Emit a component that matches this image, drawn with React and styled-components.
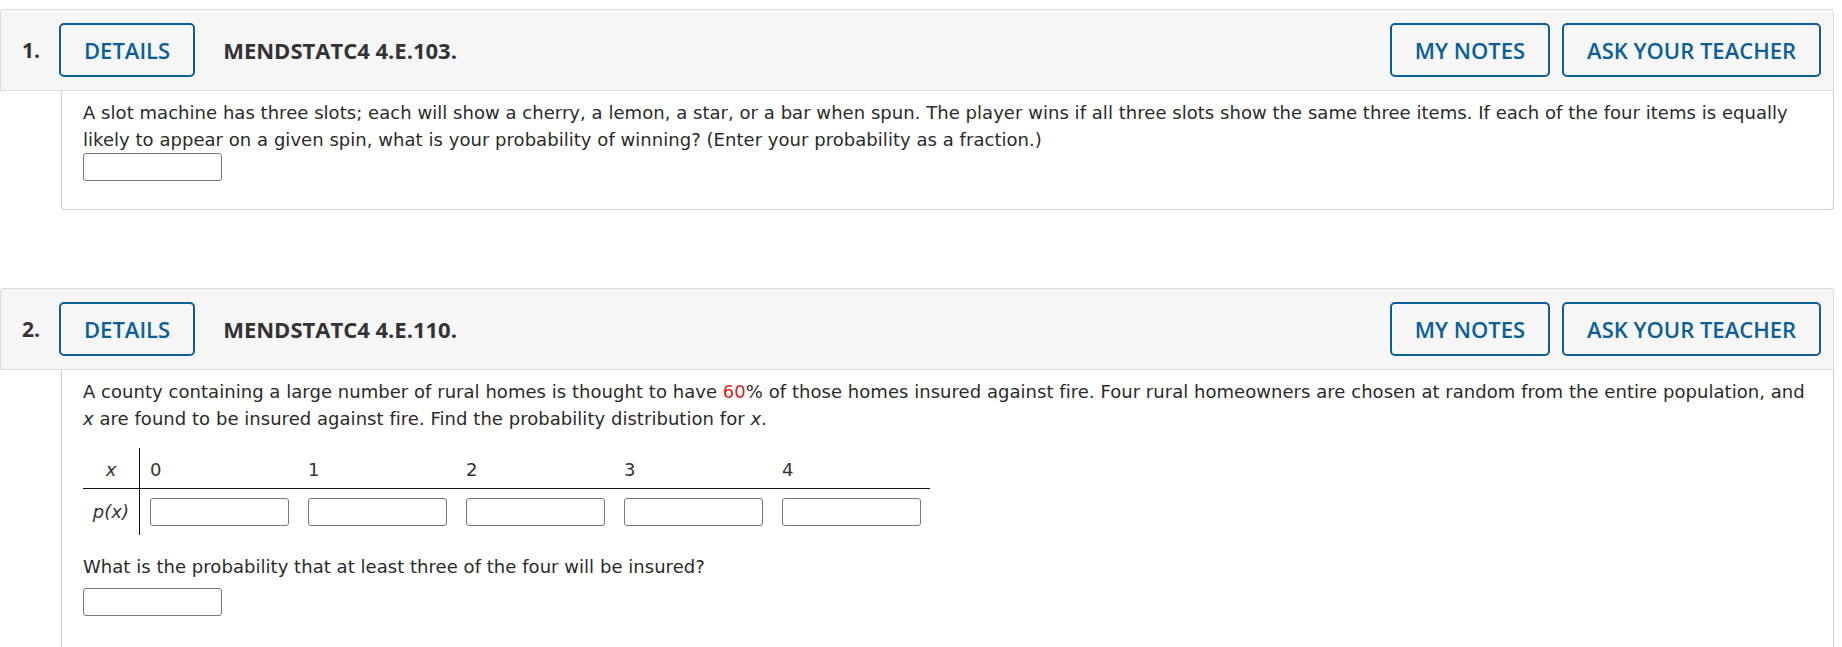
import React from 'react';
import styled, { createGlobalStyle } from 'styled-components';

const GlobalStyle = createGlobalStyle`
  body {
    margin: 0;
    background: #fff;
  }
`;

const Page = styled.div`
  display: flex;
  flex-direction: column;
  gap: 78px;
  padding: 9px 8px 0 0;
`;

const Question = styled.section`
  display: flex;
  flex-direction: column;
`;

const Header = styled.div`
  display: flex;
  align-items: center;
  height: 82px;
  box-sizing: border-box;
  padding-right: 12px;
  background: #f6f6f6;
  border: 1px solid #dcdcdc;
  border-radius: 3px 3px 0 0;
  font-family: "Open Sans", "Liberation Sans", sans-serif;
`;

const Num = styled.span`
  width: 58px;
  box-sizing: border-box;
  padding-left: 21px;
  font-size: 21px;
  font-weight: 700;
  color: #333;
`;

const Title = styled.span`
  flex: 1;
  margin-left: 28px;
  font-size: 22px;
  font-weight: 700;
  color: #333;
`;

const Actions = styled.div`
  display: flex;
  gap: 12px;
`;

const HeadButton = styled.button`
  height: 54px;
  box-sizing: border-box;
  padding: 0 23px;
  background: transparent;
  border: 2px solid #0b5f99;
  border-radius: 5px;
  font-family: inherit;
  font-size: 22px;
  font-weight: 600;
  color: #0b5f99;
  cursor: pointer;
`;

const Body = styled.div`
  margin-left: 61px;
  padding: 8px 23px ${(p) => (p.$open ? '40px' : '28px')} 21px;
  border: 1px solid #cfcfcf;
  border-top: none;
  border-bottom: ${(p) => (p.$open ? 'none' : '1px solid #cfcfcf')};
  border-radius: 0 0 4px 4px;
  font-family: "DejaVu Sans", Verdana, sans-serif;
  font-size: 18px;
  letter-spacing: 0.04px;
  line-height: 27px;
  color: #2a2a2a;
`;

const Text = styled.p`
  margin: 0;
  margin-top: ${(p) => p.$top || 0}px;
`;

const Var = styled.i`
  font-style: italic;
`;

const Red = styled.span`
  color: #e0201b;
`;

const AnswerBox = styled.input`
  display: block;
  width: 139px;
  height: 28px;
  box-sizing: border-box;
  margin: ${(p) => p.$top || 0}px 0 0;
  padding: 0 4px;
  border: 1px solid #777;
  border-radius: 3px;
  background: #fff;
  font-family: inherit;
  font-size: 15px;
`;

const Dist = styled.table`
  margin-top: 16px;
  border-collapse: collapse;
  font-size: 18px;
  color: #333;
`;

const LabelCell = styled.th`
  width: 56px;
  padding: ${(p) => (p.$head ? '4px 0 0' : '0')};
  border-right: 1px solid #111;
  font-weight: 400;
  font-style: italic;
  text-align: center;
`;

const HeadRow = styled.tr`
  height: 40px;
  border-bottom: 1px solid #111;
`;

const ValueRow = styled.tr`
  height: 47px;
`;

const HeadCell = styled.th`
  padding: 4px 9px 0 10px;
  font-weight: 400;
  text-align: left;
`;

const InputCell = styled.td`
  padding: 9px 9px 9px 10px;
`;

const values = [0, 1, 2, 3, 4];

export default function App() {
  return (
    <>
      <GlobalStyle />
      <Page>
        <Question>
          <Header>
            <Num>1.</Num>
            <HeadButton>DETAILS</HeadButton>
            <Title>MENDSTATC4 4.E.103.</Title>
            <Actions>
              <HeadButton>MY NOTES</HeadButton>
              <HeadButton>ASK YOUR TEACHER</HeadButton>
            </Actions>
          </Header>
          <Body>
            <Text>
              A slot machine has three slots; each will show a cherry, a lemon, a star, or a bar when spun. The player wins if all three slots show the same three items. If each of the four items is equally likely to appear on a given spin, what is your probability of winning? (Enter your probability as a fraction.)
            </Text>
            <AnswerBox type="text" />
          </Body>
        </Question>

        <Question>
          <Header>
            <Num>2.</Num>
            <HeadButton>DETAILS</HeadButton>
            <Title>MENDSTATC4 4.E.110.</Title>
            <Actions>
              <HeadButton>MY NOTES</HeadButton>
              <HeadButton>ASK YOUR TEACHER</HeadButton>
            </Actions>
          </Header>
          <Body $open>
            <Text>
              A county containing a large number of rural homes is thought to have <Red>60</Red>% of those homes insured against fire. Four rural homeowners are chosen at random from the entire population, and <Var>x</Var> are found to be insured against fire. Find the probability distribution for <Var>x</Var>.
            </Text>
            <Dist>
              <tbody>
                <HeadRow>
                  <LabelCell $head>x</LabelCell>
                  {values.map((v) => (
                    <HeadCell key={v}>{v}</HeadCell>
                  ))}
                </HeadRow>
                <ValueRow>
                  <LabelCell>p(x)</LabelCell>
                  {values.map((v) => (
                    <InputCell key={v}>
                      <AnswerBox type="text" />
                    </InputCell>
                  ))}
                </ValueRow>
              </tbody>
            </Dist>
            <Text $top={18}>What is the probability that at least three of the four will be insured?</Text>
            <AnswerBox type="text" $top={8} />
          </Body>
        </Question>
      </Page>
    </>
  );
}
